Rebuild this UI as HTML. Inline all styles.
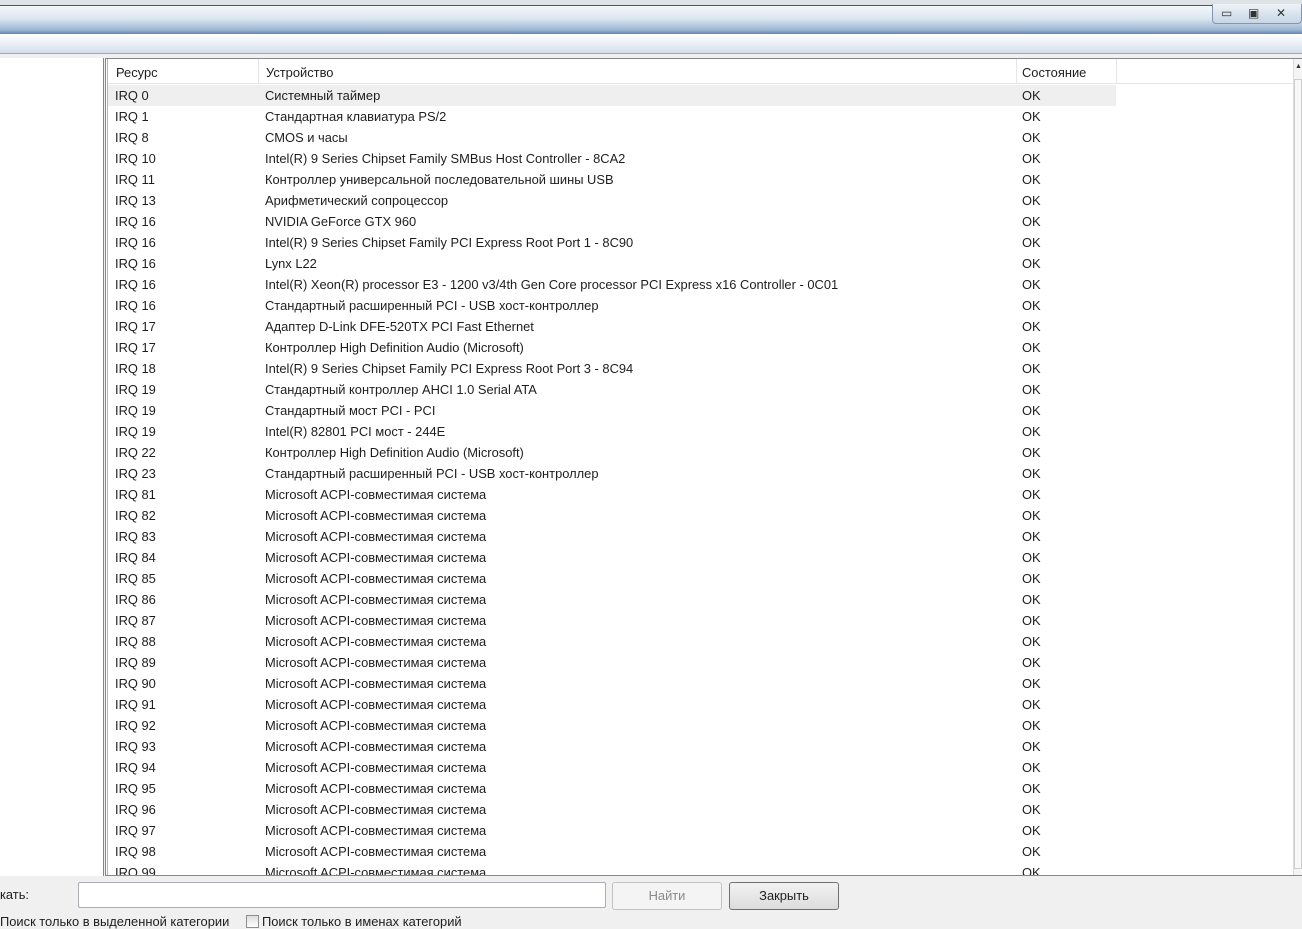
<!DOCTYPE html>
<html><head><meta charset="utf-8"><style>
*{margin:0;padding:0;box-sizing:border-box}
body{width:1302px;height:929px;overflow:hidden;background:#f0f0f0;font-family:"Liberation Sans","DejaVu Sans",sans-serif;font-size:12.9px;color:#1e1e1e;position:relative}
.top{position:absolute;left:0;top:0;width:1302px;height:5px;background:#dfe3e8}
.title{position:absolute;left:0;top:5px;width:1302px;height:29px;border-top:1px solid #555;background:linear-gradient(#f4f7fa,#dbe6f1 45%,#9db6d2 85%,#6386b0)}
.tb{position:absolute;left:0;top:34px;width:1302px;height:20px;background:linear-gradient(#fff,#e6ecf4 60%,#d3dde9);border-bottom:1px solid #a0a8b3}
.btns{position:absolute;left:1212px;top:4px;width:90px;height:20px;border:1px solid #8596ac;border-top:none;border-radius:0 0 4px 4px;background:linear-gradient(#eef3f8,#c7d5e5)}
.btns span{position:absolute;top:2px;font-size:12px;color:#333}
.list{position:absolute;left:105px;top:58px;width:1197px;height:818px;background:#fff;border:1px solid #828790;border-right:none;overflow:hidden}
.list:before{content:"";position:absolute;left:1px;top:0;bottom:0;width:1px;background:#b6b6b6}
.hdr{position:absolute;left:2px;top:0;height:25px;width:1185px;border-bottom:1px solid #e5e5e5;background:#fff}
.hdr div{position:absolute;top:6px}
.hs{position:absolute;top:0;height:25px;width:1px;background:#e5e5e5}
.row{position:absolute;left:2px;height:21px;width:1010px}
.row span{position:absolute;top:3px;white-space:nowrap}
.sb{position:absolute;right:0;top:0;width:9px;height:818px;background:#f4f4f4;border-left:1px solid #ddd}
.left{position:absolute;left:0;top:58px;width:104px;height:818px;background:#fff;border-right:1px solid #828790}
.input{position:absolute;left:78px;top:882px;width:528px;height:26px;background:#fff;border:1px solid #abadb3;border-radius:2px}
.b{position:absolute;top:882px;height:28px;border-radius:3px;text-align:center;line-height:26px}
</style></head><body>
<div class="top"></div>
<div class="title"></div>
<div class="btns"><span style="left:8px">▭</span><span style="left:35px">▣</span><span style="left:63px">✕</span></div>
<div class="tb"></div>
<div class="left"></div>
<div class="list">
<div class="hdr"><div style="left:8px">Ресурс</div><div style="left:158px">Устройство</div><div style="left:914px">Состояние</div>
<span class="hs" style="left:150px"></span><span class="hs" style="left:908px"></span><span class="hs" style="left:1008px"></span></div>
<div class="row" style="top:26px;background:#efefef;width:1008px"><span style="left:7px">IRQ 0</span><span style="left:157px">Системный таймер</span><span style="left:914px">OK</span></div>
<div id="rows"></div>
<div class="sb"><div style="position:absolute;top:4px;left:1px;font-size:7px;color:#333">▲</div><div style="position:absolute;top:20px;left:0;width:8px;height:790px;border:1px solid #ccc;background:#f8f8f8"></div></div>
</div>
<div style="position:absolute;left:0;top:887px">кать:</div>
<div class="input"></div>
<div class="b" style="left:612px;width:110px;border:1px solid #c2c2c2;background:#f4f4f4;color:#8a8a8a">Найти</div>
<div class="b" style="left:729px;width:110px;border:1px solid #707070;background:linear-gradient(#f2f2f2,#dcdcdc)">Закрыть</div>
<div style="position:absolute;left:0;top:914px">Поиск только в выделенной категории</div>
<div style="position:absolute;left:246px;top:915px;width:13px;height:13px;border:1px solid #8f8f8f;background:linear-gradient(#ddd,#fff)"></div>
<div style="position:absolute;left:262px;top:914px">Поиск только в именах категорий</div>
<script>
var d=[["IRQ 1","Стандартная клавиатура PS/2"],["IRQ 8","CMOS и часы"],["IRQ 10","Intel(R) 9 Series Chipset Family SMBus Host Controller - 8CA2"],["IRQ 11","Контроллер универсальной последовательной шины USB"],["IRQ 13","Арифметический сопроцессор"],["IRQ 16","NVIDIA GeForce GTX 960"],["IRQ 16","Intel(R) 9 Series Chipset Family PCI Express Root Port 1 - 8C90"],["IRQ 16","Lynx L22"],["IRQ 16","Intel(R) Xeon(R) processor E3 - 1200 v3/4th Gen Core processor PCI Express x16 Controller - 0C01"],["IRQ 16","Стандартный расширенный PCI - USB хост-контроллер"],["IRQ 17","Адаптер D-Link DFE-520TX PCI Fast Ethernet"],["IRQ 17","Контроллер High Definition Audio (Microsoft)"],["IRQ 18","Intel(R) 9 Series Chipset Family PCI Express Root Port 3 - 8C94"],["IRQ 19","Стандартный контроллер AHCI 1.0 Serial ATA"],["IRQ 19","Стандартный мост PCI - PCI"],["IRQ 19","Intel(R) 82801 PCI мост - 244E"],["IRQ 22","Контроллер High Definition Audio (Microsoft)"],["IRQ 23","Стандартный расширенный PCI - USB хост-контроллер"]];
for(var i=81;i<=99;i++)d.push(["IRQ "+i,"Microsoft ACPI-совместимая система"]);
var h="";for(var j=0;j<d.length;j++){h+='<div class="row" style="top:'+(47+21*j)+'px"><span style="left:7px">'+d[j][0]+'</span><span style="left:157px">'+d[j][1]+'</span><span style="left:914px">OK</span></div>';}
document.getElementById("rows").outerHTML=h;
</script>
</body></html>
